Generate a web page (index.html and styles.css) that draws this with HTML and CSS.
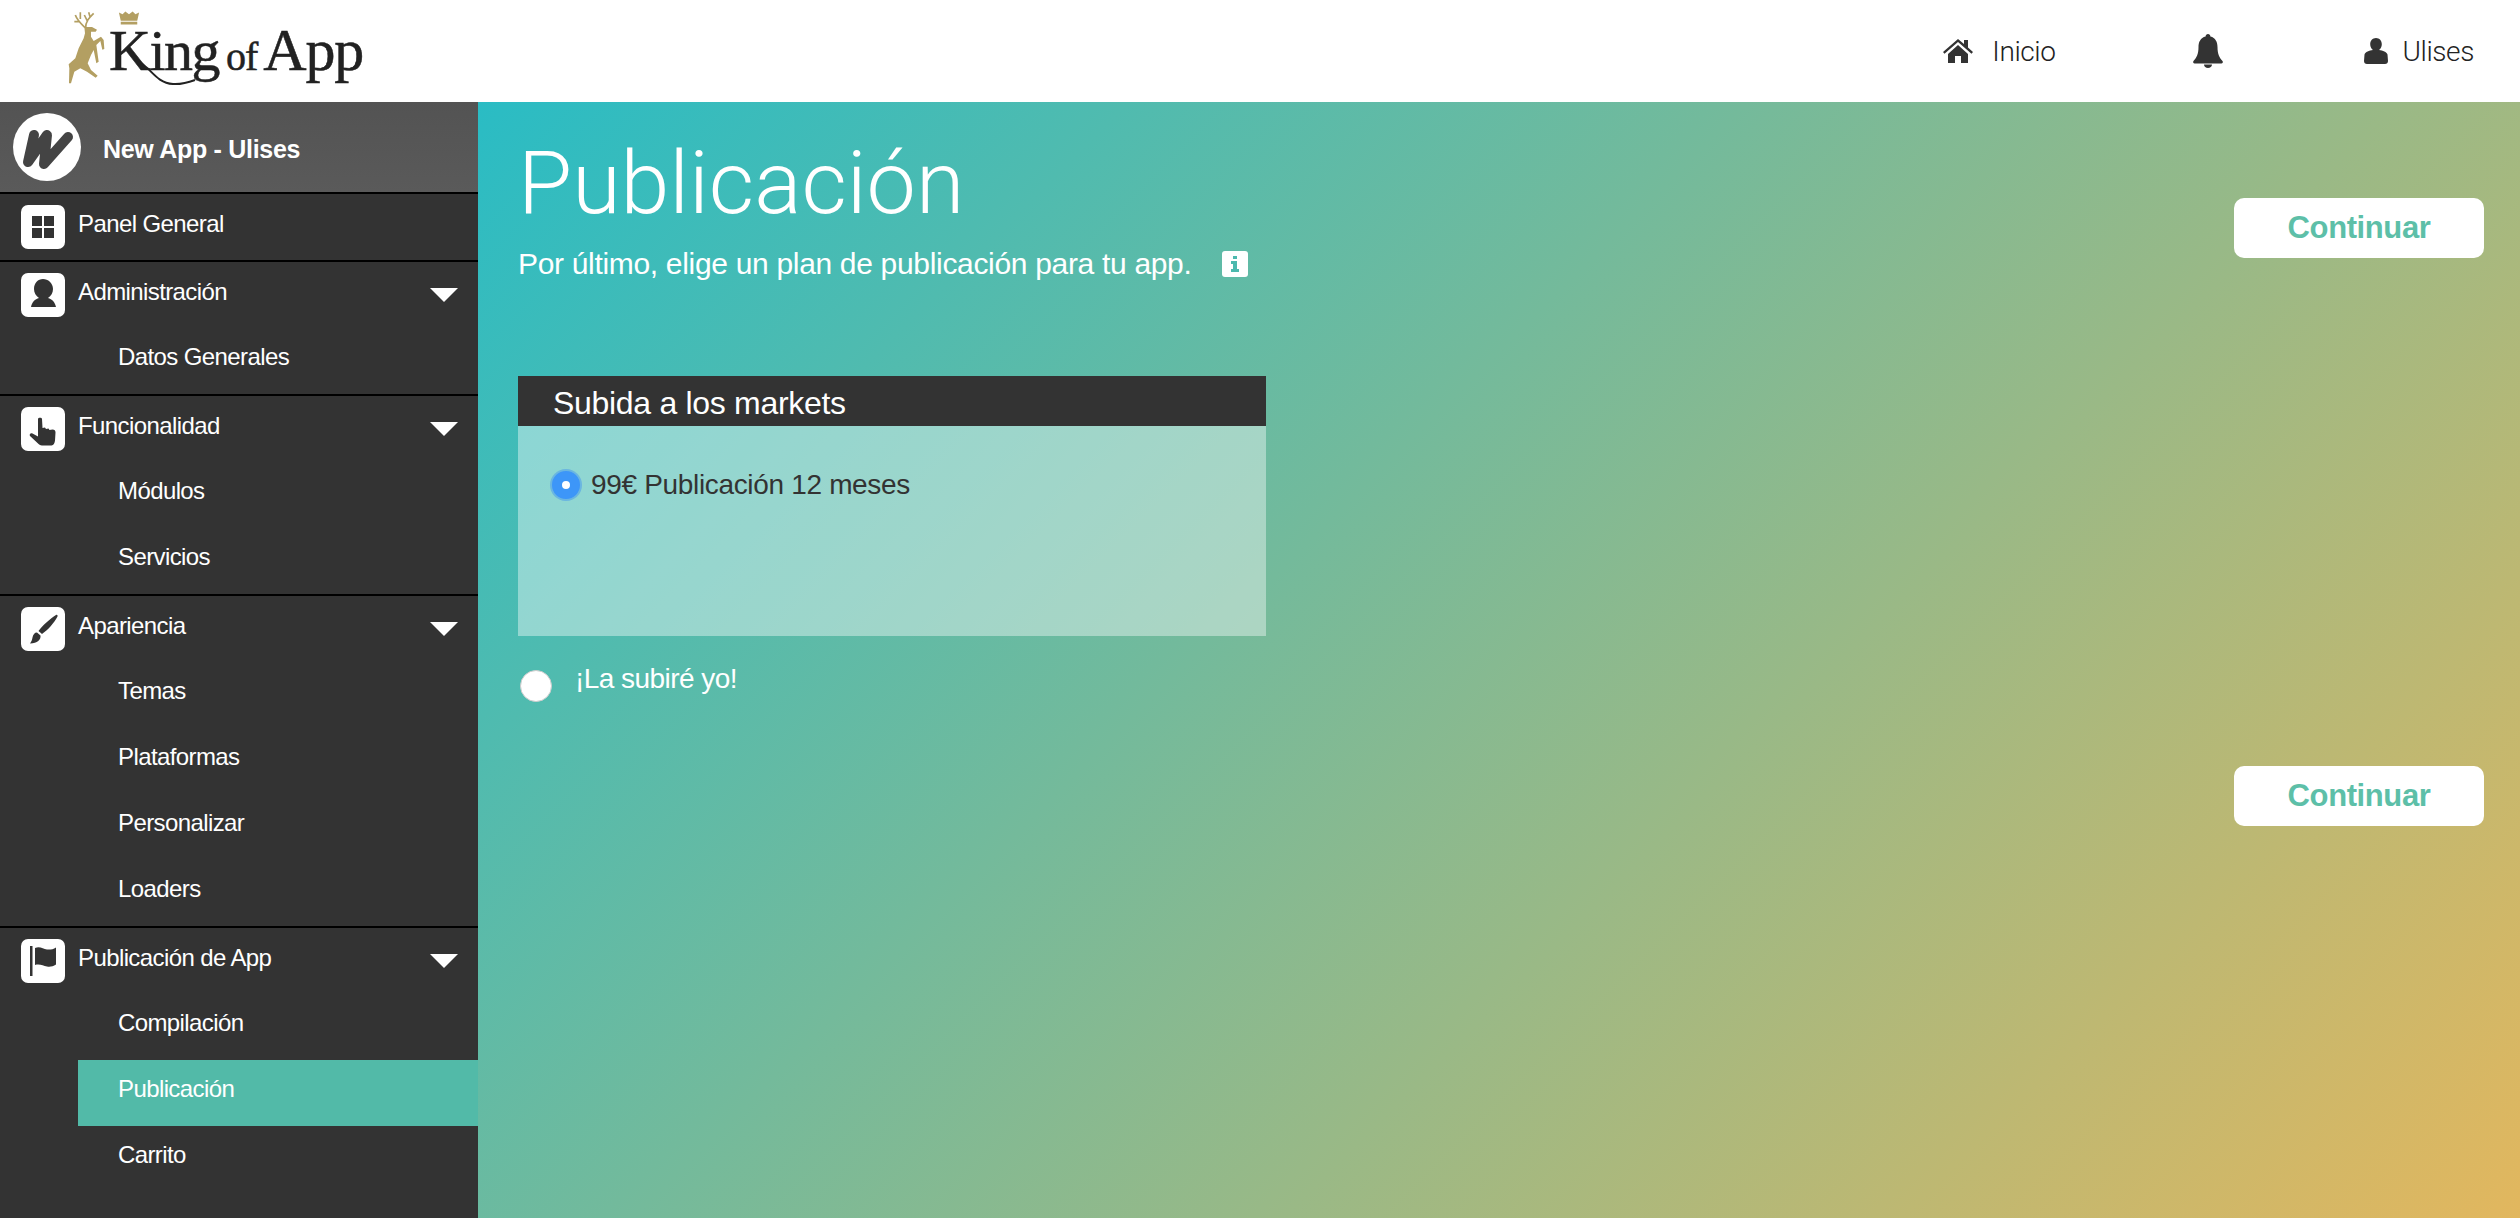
FILE: index.html
```html
<!DOCTYPE html>
<html>
<head>
  <title>King of App - Publicación</title>
  <link rel="stylesheet" href="styles.css">
</head>
<body>
  <header class="topbar">
    <div class="logo">
      <svg class="logo-stag" viewBox="20 15 120 225" width="40" height="75">
        <path fill="#b39f62" d="M72 66L95 66 110 74 106 80 92 80 92 95 100 108 122 95 130 105 132 132 126 134 120 108 108 120 115 170 108 175 100 135 92 150 82 175 92 195 112 212 106 218 80 200 60 190 42 200 32 235 26 235 27 190 25 178 45 160 55 130 70 100 74 85z"/>
        <path fill="none" stroke="#b39f62" stroke-width="5" d="M74 68C62 56 50 45 45 30M55 50L42 50M60 42L60 22M76 68C76 50 85 40 100 25M82 50L72 30M90 38L85 22"/>
      </svg>
      <div class="logo-word">
        <svg class="logo-crown" viewBox="0 0 24 14" width="22" height="14">
          <path fill="#b39f62" d="M1 1l4 2 3-3 4 3 4-3 3 3 4-2-2 9H3zM3 11h18v3H3z"/>
        </svg>
        <span class="logo-king">King</span><span class="logo-of">of</span><span class="logo-app">App</span>
        <svg class="logo-swash" viewBox="0 0 56 24" width="56" height="24">
          <path fill="none" stroke="#222" stroke-width="2" d="M1 1c10 6 16 20 32 21 8 .5 14-1 22-4"/>
        </svg>
      </div>
    </div>
    <nav class="topnav">
      <a class="topnav-item nav-home">
        <svg viewBox="0 0 30 24" width="30" height="24"><path fill="#333" d="M15 0L0 13l1.500 1.700L15 3l13.500 11.700L30 13l-5-4.400V1h-4v4.100zM5 15v9h7v-7h6v7h7v-9L15 6z"/></svg>
        Inicio
      </a>
      <a class="topnav-item nav-bell">
        <svg viewBox="0 0 30 34" width="30" height="34"><path fill="#333" d="M15 0c-1.400 0-2.400 1-2.400 2.400C7.500 3.600 5.500 8 5.500 13c0 7-2 11-5 14-.7 1-.3 2.500 1 2.500h27c1.300 0 1.700-1.500 1-2.500-3-3-5-7-5-14 0-5-2-9.400-7.100-10.600C17.400 1 16.400 0 15 0zM11 30.500c0 2 1.800 3.500 4 3.500s4-1.500 4-3.500z"/></svg>
      </a>
      <a class="topnav-item nav-user">
        <svg viewBox="0 0 24 26" width="24" height="26"><path fill="#333" d="M12 0c-3.500 0-5.800 2.800-5.800 6.300 0 2.500 1.100 4.500 2.800 5.700-4 .6-7.500 1.800-8.500 4.500L0 23c0 1.800 1.200 3 3 3h18c1.800 0 3-1.200 3-3l-.5-6.500c-1-2.700-4.500-3.900-8.500-4.500 1.700-1.200 2.800-3.200 2.800-5.700C17.800 2.800 15.500 0 12 0z"/></svg>
        Ulises
      </a>
    </nav>
  </header>

  <div class="page">
    <aside class="sidebar">
      <div class="app-head">
        <span class="app-avatar">
          <svg viewBox="0 0 68 68" width="68" height="68">
            <circle cx="34" cy="34" r="34" fill="#fff"/>
            <path fill="none" stroke="#444" stroke-width="10" stroke-linecap="round" stroke-linejoin="round" d="M21 22L15 49 34 22 31 51 55 24"/>
          </svg>
        </span>
        <span class="app-name">New App - Ulises</span>
      </div>

      <section class="menu-group">
        <div class="menu-head">
          <span class="menu-icon"><svg viewBox="0 0 44 44"><path fill="#333" d="M11 11h10v10H11zM23 11h10v10H23zM11 23h10v10H11zM23 23h10v10H23z"/></svg></span>
          <span class="menu-label">Panel General</span>
        </div>
      </section>

      <section class="menu-group">
        <div class="menu-head">
          <span class="menu-icon"><svg viewBox="0 0 44 44"><path fill="#333" d="M22 6c-5 0-9 4-9 10 0 4 2 7 5 9-4 1-7 4-8 9h25c-1-5-4-8-8-9 3-2 5-5 5-9 0-6-5-10-10-10z"/></svg></span>
          <span class="menu-label">Administración</span>
          <span class="caret"></span>
        </div>
        <a class="menu-link">Datos Generales</a>
      </section>

      <section class="menu-group">
        <div class="menu-head">
          <span class="menu-icon"><svg viewBox="0 0 44 44"><path fill="#333" d="M17 12c0-1.800 4-1.800 4 0l.5 9 2.500-.5 1 1.500 2.500-.5 1 1.500 3-.5c2 0 3 1 3 3l-.5 8c-.2 2.500-1.500 5-3.500 5H21c-2 0-3-1-4.500-2.500L9 29c-1-1.500.5-3.500 2.500-2.500l5.500 3z"/></svg></span>
          <span class="menu-label">Funcionalidad</span>
          <span class="caret"></span>
        </div>
        <a class="menu-link">Módulos</a>
        <a class="menu-link">Servicios</a>
      </section>

      <section class="menu-group">
        <div class="menu-head">
          <span class="menu-icon"><svg viewBox="0 0 44 44"><path fill="#333" d="M35 8c1-.5 2 .5 1.500 1.500C33 16 27 23 21 27l-3.500-3C22 18 29 12 35 8zM16 25.500l3.500 3c.5 4-3 8-10.500 8 1.500-2 2-3.500 2.500-6 .5-3 2-5 4.500-5z"/></svg></span>
          <span class="menu-label">Apariencia</span>
          <span class="caret"></span>
        </div>
        <a class="menu-link">Temas</a>
        <a class="menu-link">Plataformas</a>
        <a class="menu-link">Personalizar</a>
        <a class="menu-link">Loaders</a>
      </section>

      <section class="menu-group">
        <div class="menu-head">
          <span class="menu-icon"><svg viewBox="0 0 44 44"><path fill="#333" d="M9 7h2.500v30H9zM14 9c5-2 8 1 12 1.500 3 .3 6 0 9-2v17c-3 2-6 2.500-9 2-4-.5-7-3-12-1.500z"/></svg></span>
          <span class="menu-label">Publicación de App</span>
          <span class="caret"></span>
        </div>
        <a class="menu-link">Compilación</a>
        <a class="menu-link is-active">Publicación</a>
        <a class="menu-link">Carrito</a>
      </section>
    </aside>

    <main class="main">
      <div class="content">
        <h1 class="title">Publicación</h1>
        <p class="subtitle">
          Por último, elige un plan de publicación para tu app.
          <span class="info-icon"><svg viewBox="0 0 26 26" width="26" height="26"><rect width="26" height="26" rx="3" fill="#fff"/><path fill="#4cb9ae" d="M11 5h4v3h-4zM9 10h6v8h2v3H9v-3h2v-5H9z"/></svg></span>
        </p>

        <div class="plan-card">
          <h2 class="plan-title">Subida a los markets</h2>
          <div class="plan-body">
            <label class="plan-option">
              <span class="radio-on"></span>
              99€ Publicación 12 meses
            </label>
          </div>
        </div>

        <label class="self-option">
          <span class="radio-off"></span>
          <span class="self-text">¡La subiré yo!</span>
        </label>
      </div>

      <div class="actions">
        <button class="btn-continue" type="button">Continuar</button>
        <button class="btn-continue" type="button">Continuar</button>
      </div>
    </main>
  </div>
</body>
</html>
```

FILE: styles.css
```css
* {
  box-sizing: border-box;
}

html, body {
  height: 100%;
}

body {
  margin: 0;
  display: flex;
  flex-direction: column;
  font-family: "Liberation Sans", Arial, sans-serif;
  color: #333;
  overflow: hidden;
}

/* top bar */
.topbar {
  height: 102px;
  flex: none;
  display: flex;
  justify-content: space-between;
  background-color: #fff;
}

.logo {
  display: flex;
  align-items: flex-start;
  padding: 10px 0 0 67px;
}

.logo-stag {
  flex: none;
}

.logo-word {
  position: relative;
  display: flex;
  align-items: baseline;
  height: 74px;
  margin-left: 2px;
  padding-top: 6px;
  font-family: "Liberation Serif", serif;
  color: #222;
  -webkit-text-stroke: 0.5px #222;
}

.logo-crown {
  position: absolute;
  left: 9px;
  top: 1px;
}

.logo-swash {
  position: absolute;
  left: 31px;
  top: 52px;
}

.logo-king {
  font-size: 58px;
  letter-spacing: -1.5px;
}

.logo-of {
  font-size: 40px;
  margin: 0 6px 0 7px;
  letter-spacing: -1px;
}

.logo-app {
  font-size: 60px;
  letter-spacing: -1.2px;
}

.topnav {
  display: flex;
  align-items: center;
  padding-right: 46px;
}

.topnav-item {
  display: flex;
  align-items: center;
  font-size: 28px;
  font-family: Roboto, sans-serif;
  font-weight: 300;
  letter-spacing: -0.4px;
  color: #222;
}

.nav-home svg {
  margin-right: 19px;
}

.nav-bell {
  margin-left: 137px;
}

.nav-user {
  margin-left: 141px;
}

.nav-user svg {
  margin-right: 15px;
}

/* page */
.page {
  flex: 1;
  display: flex;
  min-height: 0;
}

.sidebar {
  width: 478px;
  flex: none;
  background-color: #333;
  color: #fff;
  font-size: 24px;
  letter-spacing: -0.6px;
}

.app-head {
  height: 90px;
  display: flex;
  align-items: center;
  padding-left: 13px;
  background: linear-gradient(to bottom, #535353, #5a5a5a);
}

.app-avatar {
  display: flex;
  margin-right: 22px;
}

.app-name {
  margin-top: 4px;
  font-size: 25px;
  font-weight: bold;
  letter-spacing: -0.3px;
}

.menu-group {
  border-top: 2px solid #000;
}

.menu-head {
  height: 66px;
  display: flex;
  align-items: center;
  padding: 0 20px 0 21px;
}

.menu-icon {
  width: 44px;
  height: 44px;
  margin-right: 13px;
  border-radius: 7px;
  background-color: #fff;
}

.menu-icon svg {
  display: block;
  width: 44px;
  height: 44px;
}

.menu-label {
  margin-bottom: 7px;
}

.caret {
  margin-left: auto;
  border-style: solid;
  border-width: 14px 14px 0 14px;
  border-color: #fff transparent transparent transparent;
}

.menu-link {
  height: 66px;
  display: flex;
  align-items: center;
  margin-left: 78px;
  padding: 0 0 8px 40px;
}

.menu-link.is-active {
  background-color: #52baa8;
}

/* main */
.main {
  flex: 1;
  display: flex;
  justify-content: space-between;
  padding: 0 36px 0 40px;
  background: linear-gradient(135deg, #2abcc4, #e2b75e);
}

.content {
  width: 748px;
}

.title {
  margin: 31px 0 0;
  font-family: Roboto, sans-serif;
  font-size: 88px;
  font-weight: 300;
  line-height: 100px;
  color: #fff;
}

.subtitle {
  display: flex;
  align-items: center;
  margin: 13px 0 0;
  font-size: 30px;
  line-height: 36px;
  letter-spacing: -0.32px;
  color: #fff;
}

.info-icon {
  display: flex;
  margin-left: 30px;
}

.plan-card {
  margin-top: 94px;
}

.plan-title {
  height: 50px;
  margin: 0;
  padding-left: 35px;
  font-size: 32px;
  font-weight: normal;
  line-height: 54px;
  letter-spacing: -0.3px;
  color: #fff;
  background-color: #333;
}

.plan-body {
  height: 210px;
  padding: 42px 0 0 32px;
  background-color: rgba(255, 255, 255, 0.4);
}

.plan-option {
  display: flex;
  align-items: center;
  font-size: 28px;
  line-height: 34px;
  letter-spacing: -0.33px;
}

.radio-on {
  width: 28px;
  height: 28px;
  margin: 0 11px 0 2px;
  border: 10px solid #3d96f8;
  border-radius: 50%;
  background-color: #fff;
  box-shadow: 0 0 0 2px rgba(70, 150, 240, 0.5);
}

.self-option {
  display: flex;
  align-items: flex-start;
  margin-top: 30px;
  padding-left: 2px;
  font-size: 28px;
  letter-spacing: -0.55px;
  color: #fff;
}

.radio-off {
  width: 32px;
  height: 32px;
  margin: 4px 23px 0 0;
  border: 1px solid #ccc;
  border-radius: 50%;
  background-color: #fff;
}

.self-text {
  margin-top: -3px;
}

.actions {
  flex: none;
  display: flex;
  flex-direction: column;
  gap: 508px;
  padding-top: 96px;
}

.btn-continue {
  width: 250px;
  height: 60px;
  border: 0;
  border-radius: 10px;
  background-color: #fff;
  font-family: "Liberation Sans", Arial, sans-serif;
  font-size: 31px;
  font-weight: bold;
  letter-spacing: -0.4px;
  color: #5dbfa8;
}
```
